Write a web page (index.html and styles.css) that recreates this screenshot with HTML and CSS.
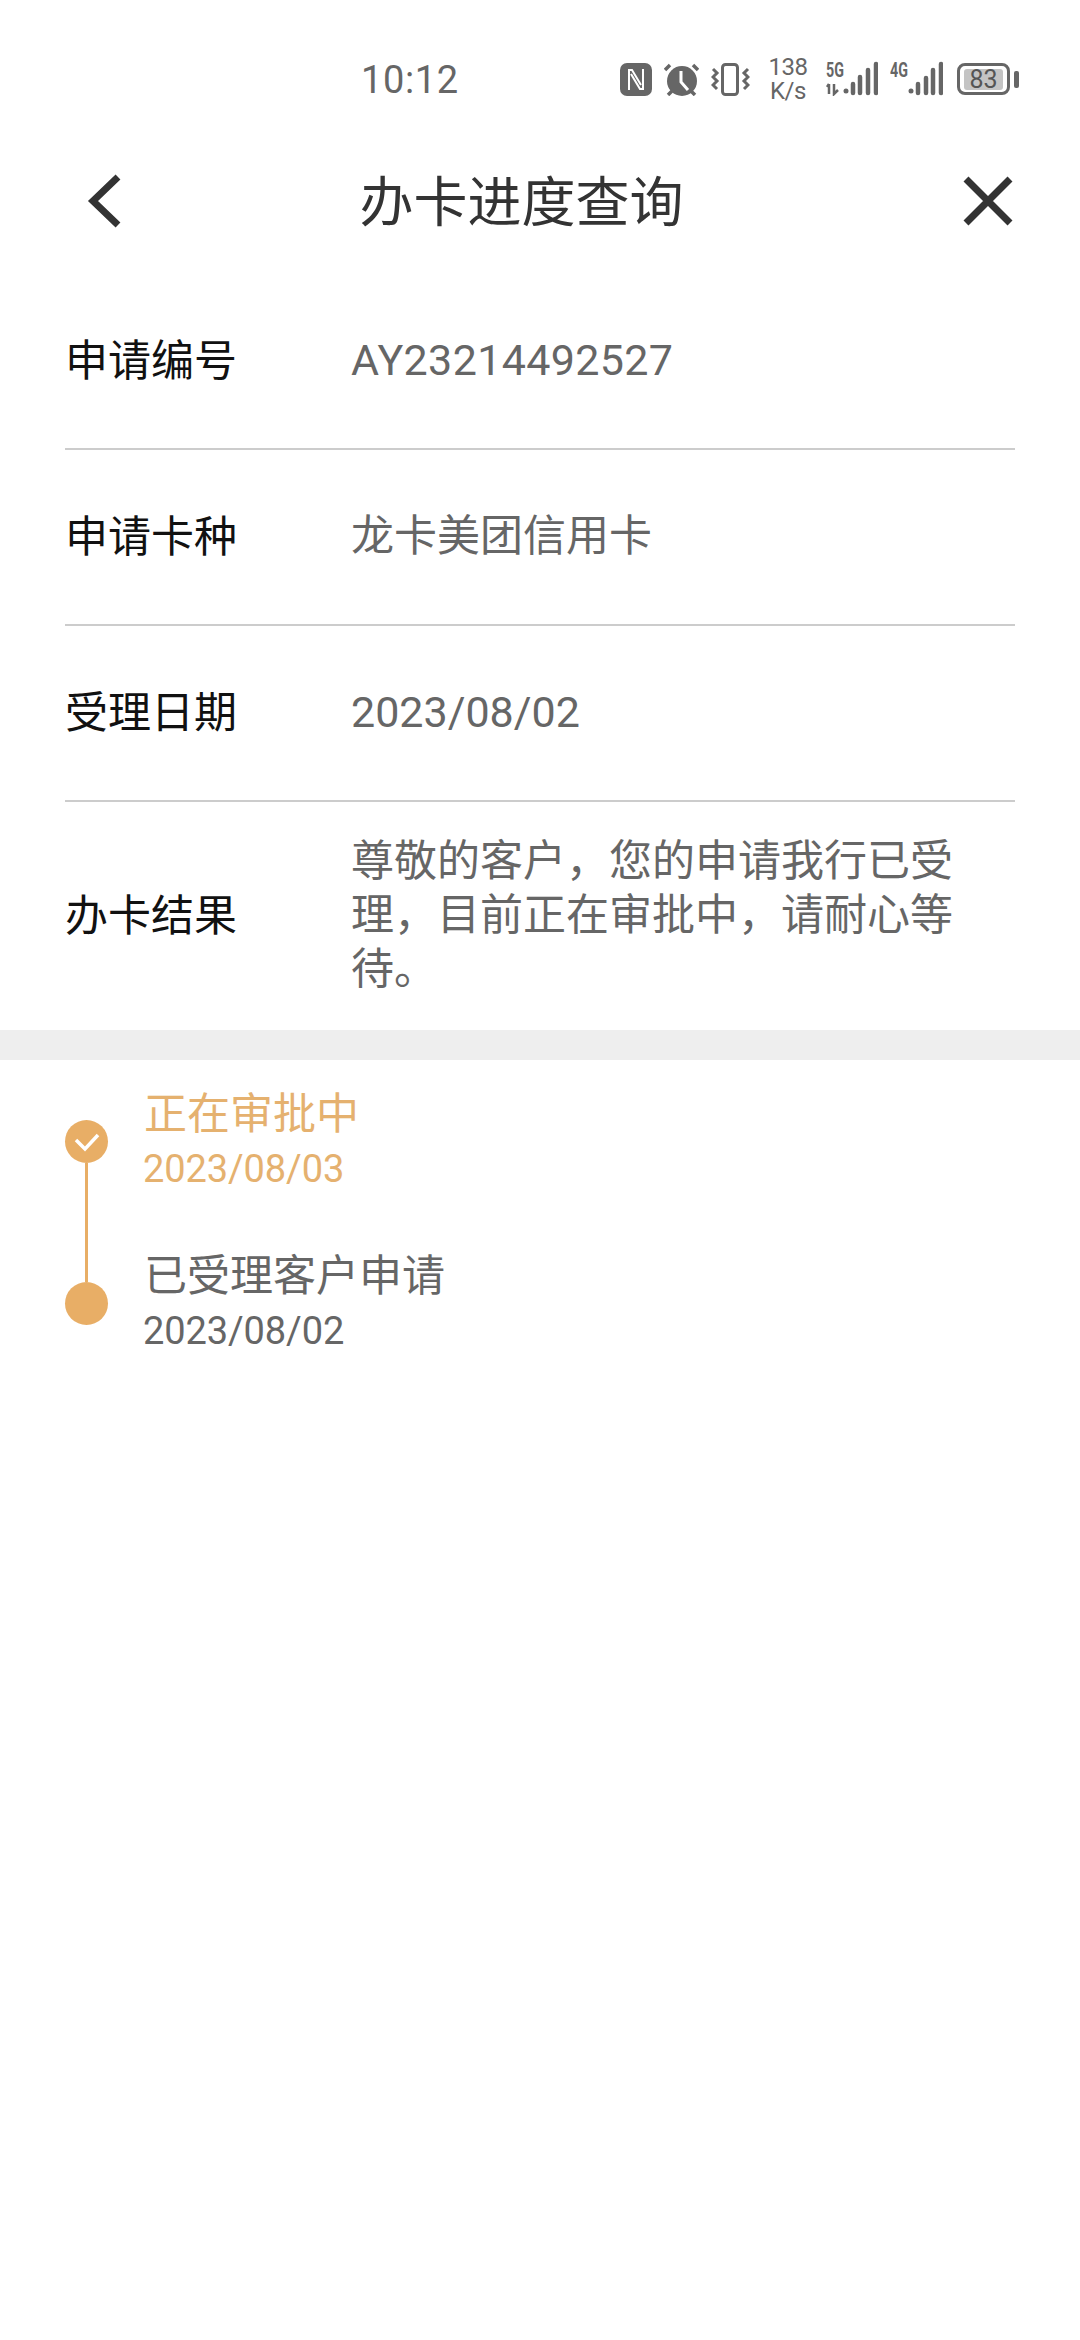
FILE: index.html
```html
<!DOCTYPE html>
<html lang="zh-CN">
<head>
    <meta charset="UTF-8">
    <meta name="viewport" content="width=device-width, initial-scale=1.0">
    <title>办卡进度查询</title>
    <link rel="stylesheet" href="styles.css">
</head>
<body>
    <div class="status-bar">
        <span class="time">10:12</span>
        <div class="status-icons">
            <svg class="ic-nfc" width="32" height="33" viewBox="0 0 32 33">
                <rect width="32" height="33" rx="7" fill="#666"/>
                <path d="M9 27V7H12L21 22" fill="none" stroke="#fff" stroke-width="2"/>
                <path d="M23 6V26H20L11 11" fill="none" stroke="#fff" stroke-width="2"/>
            </svg>
            <svg class="ic-alarm" width="35" height="33" viewBox="0 0 35 33">
                <circle cx="18" cy="18" r="15" fill="#666"/>
                <path d="M17 8V19L24 27" fill="none" stroke="#fff" stroke-width="3"/>
                <path d="M1 7L6 2M34 7L29 2M4 32L8 28M31 32L27 28" stroke="#666" stroke-width="3.5" fill="none"/>
            </svg>
            <svg class="ic-vibrate" width="39" height="33" viewBox="0 0 39 33">
                <rect x="11.5" y="1.5" width="15" height="30" rx="3" fill="none" stroke="#666" stroke-width="3"/>
                <path d="M2 6L6 10L2 14L6 18L2 22L6 26" fill="none" stroke="#666" stroke-width="3"/>
                <path d="M37 6L33 10L37 14L33 18L37 22L33 26" fill="none" stroke="#666" stroke-width="3"/>
            </svg>
            <div class="speed"><span>138</span><span>K/s</span></div>
            <div class="signal">
                <span class="net">5G</span>
                <svg width="52" height="36" viewBox="0 0 52 36">
                    <path d="M3 24V34M1 27L3 24M8 24V34L12 30" fill="none" stroke="#666" stroke-width="2.5"/>
                    <circle cx="20" cy="31" r="2.5" fill="#666"/>
                    <path d="M27 24V33M34 17V33M42 10V33M50 4V33" fill="none" stroke="#666" stroke-width="4.5" stroke-linecap="round"/>
                </svg>
            </div>
            <div class="signal signal-second">
                <span class="net">4G</span>
                <svg width="53" height="36" viewBox="0 0 53 36">
                    <circle cx="21" cy="31" r="2.5" fill="#666"/>
                    <path d="M28 24V33M36 18V33M43 10V33M51 4V33" fill="none" stroke="#666" stroke-width="4.5" stroke-linecap="round"/>
                </svg>
            </div>
            <div class="battery">
                <div class="battery-body"><span class="battery-level">83</span></div>
                <div class="battery-tip"></div>
            </div>
        </div>
    </div>

    <header class="nav">
        <svg class="nav-back" width="36" height="54" viewBox="0 0 36 54">
            <path d="M32 3L7 27L32 51" fill="none" stroke="#333" stroke-width="7"/>
        </svg>
        <h1>办卡进度查询</h1>
        <svg class="nav-close" width="50" height="50" viewBox="0 0 50 50">
            <path d="M3 3L47 47M47 3L3 47" fill="none" stroke="#333" stroke-width="7"/>
        </svg>
    </header>

    <section class="info">
        <div class="info-row">
            <span class="info-label">申请编号</span>
            <span class="info-value info-value-id">AY23214492527</span>
        </div>
        <div class="info-row">
            <span class="info-label">申请卡种</span>
            <span class="info-value">龙卡美团信用卡</span>
        </div>
        <div class="info-row">
            <span class="info-label">受理日期</span>
            <span class="info-value">2023/08/02</span>
        </div>
        <div class="info-row info-row-last">
            <span class="info-label">办卡结果</span>
            <span class="info-value">尊敬的客户，您的申请我行已受理，目前正在审批中，请耐心等待。</span>
        </div>
    </section>

    <div class="band"></div>

    <section class="timeline">
        <div class="step step-active">
            <div class="rail">
                <div class="dot">
                    <svg width="26" height="20" viewBox="0 0 26 20">
                        <path d="M2 8L11 17L24 3" fill="none" stroke="#fff" stroke-width="3.5"/>
                    </svg>
                </div>
                <div class="rail-line"></div>
            </div>
            <div class="step-text">
                <div class="step-title">正在审批中</div>
                <div class="step-date">2023/08/03</div>
            </div>
        </div>
        <div class="step">
            <div class="rail">
                <div class="dot"></div>
            </div>
            <div class="step-text">
                <div class="step-title">已受理客户申请</div>
                <div class="step-date">2023/08/02</div>
            </div>
        </div>
    </section>
</body>
</html>
```

FILE: styles.css
```css
body {
    margin: 0;
    width: 1080px;
    height: 2340px;
    overflow: hidden;
    background-color: #fff;
    font-family: Roboto, "Noto Sans CJK SC", sans-serif;
}

/* status bar */
.status-bar {
    height: 150px;
    box-sizing: border-box;
    padding: 58px 61px 0 361px;
    display: flex;
    justify-content: space-between;
    align-items: flex-start;
    color: #666;
}

.time {
    font-size: 38px;
    line-height: 44px;
    letter-spacing: 0.6px;
}

.status-icons {
    display: flex;
    align-items: flex-start;
    margin-top: 5px;
}

.ic-alarm,
.ic-vibrate {
    margin-left: 12px;
}

.speed {
    display: flex;
    flex-direction: column;
    align-items: center;
    width: 38px;
    margin-top: -8px;
    margin-left: 19px;
    font-size: 24px;
    line-height: 24px;
    letter-spacing: -0.5px;
}

.signal {
    position: relative;
    width: 52px;
    margin-top: -3px;
    margin-left: 19px;
}

.signal svg {
    display: block;
}

.signal-second {
    width: 53px;
    margin-left: 12px;
}

.net {
    position: absolute;
    left: 0;
    top: 0;
    font-size: 21px;
    line-height: 20px;
    font-weight: 700;
    transform: scaleX(0.68);
    transform-origin: left top;
}

.battery {
    display: flex;
    align-items: center;
    margin-left: 14px;
}

.battery-body {
    width: 53px;
    height: 32px;
    box-sizing: border-box;
    border: 3px solid #666;
    border-radius: 8px;
    padding: 3px 2px 2px;
    display: flex;
}

.battery-level {
    width: 39px;
    margin: 0 auto;
    background-color: #c4c4c4;
    border-radius: 3px;
    color: #555;
    font-size: 25px;
    line-height: 21px;
    text-align: center;
}

.battery-tip {
    width: 5px;
    height: 17px;
    margin-left: 4px;
    background-color: #666;
    border-radius: 2px;
}

/* nav */
.nav {
    height: 102px;
    display: flex;
    align-items: center;
    justify-content: space-between;
    padding: 0 67px 0 86px;
    margin-bottom: 22px;
}

.nav h1 {
    margin: 0;
    flex: 1;
    text-align: center;
    font-size: 54px;
    font-weight: 400;
    color: #333;
    padding-right: 42px;
    padding-bottom: 6px;
}

/* info rows */
.info {
    padding: 0 65px;
}

.info-row {
    height: 176px;
    box-sizing: border-box;
    display: flex;
    align-items: center;
    border-bottom: 2px solid #ccc;
}

.info-row-last {
    height: 228px;
    border-bottom: none;
}

.info-label {
    width: 286px;
    flex-shrink: 0;
    padding-bottom: 8px;
    font-size: 43px;
    color: #111;
}

.info-value {
    font-size: 43px;
    line-height: 54px;
    padding-bottom: 2px;
    color: #666;
    width: 610px;
}

.info-value-id {
    letter-spacing: 0.35px;
}

.band {
    height: 30px;
    background-color: #eee;
}

/* timeline */
.timeline {
    padding: 27px 0 0 65px;
}

.step {
    height: 162px;
    display: flex;
}

.rail {
    width: 43px;
    margin-top: 33px;
    margin-right: 36px;
    display: flex;
    flex-direction: column;
    align-items: center;
}

.dot {
    width: 43px;
    height: 43px;
    flex-shrink: 0;
    border-radius: 50%;
    background-color: #e8ae66;
    display: flex;
    align-items: center;
    justify-content: center;
}

.rail-line {
    width: 3px;
    height: 119px;
    flex-shrink: 0;
    background-color: #e8ae66;
}

.step-title {
    font-size: 43px;
    line-height: 54px;
    color: #666;
}

.step-date {
    font-size: 38px;
    line-height: 56px;
    margin-left: -1px;
    letter-spacing: -0.1px;
    color: #666;
}

.step-active .step-title,
.step-active .step-date {
    color: #e5b16f;
}
```
